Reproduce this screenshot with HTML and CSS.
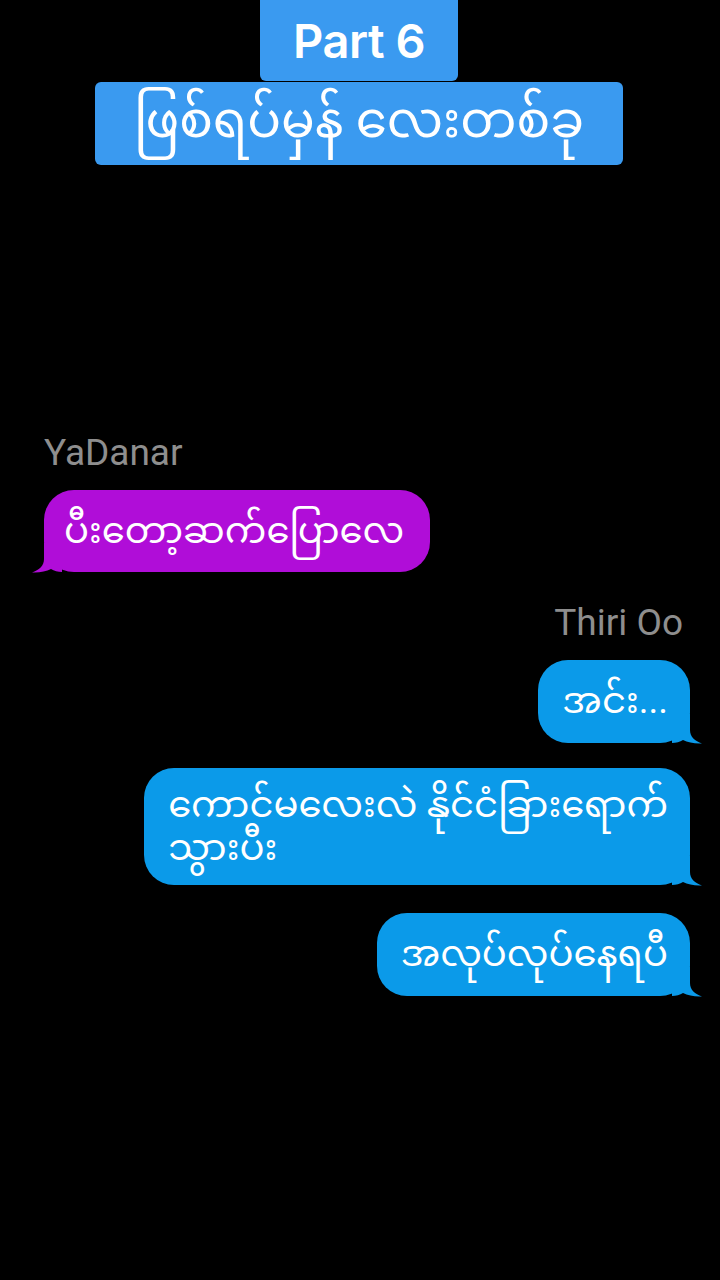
FILE: index.html
```html
<!DOCTYPE html>
<html lang="my">

<head>
    <meta charset="UTF-8">
    <meta name="viewport" content="width=device-width, initial-scale=1.0">
    <title>Part 6</title>
    <link rel="stylesheet" href="styles.css">
</head>

<body>

    <header class="title">
        <div class="title-tab">Part 6</div>
        <div class="title-box">ဖြစ်ရပ်မှန် လေးတစ်ခု</div>
    </header>

    <main class="chat">
        <div class="name">YaDanar</div>
        <div class="row">
            <div class="bubble bubble-in">
                ပီးတော့ဆက်ပြောလေ
                <svg class="tail tail-left" width="30" height="30" viewBox="0 0 30 30">
                    <path d="M12 0 L12 16 C12 23, 7 27, 0 29.5 C7 30, 14 28.5, 19 26 C22 28, 26 29, 30 29 L30 0 Z" />
                </svg>
            </div>
        </div>

        <div class="name name-out">Thiri Oo</div>
        <div class="row row-out">
            <div class="bubble bubble-out">
                အင်း...
                <svg class="tail tail-right" width="30" height="30" viewBox="0 0 30 30">
                    <path d="M12 0 L12 16 C12 23, 7 27, 0 29.5 C7 30, 14 28.5, 19 26 C22 28, 26 29, 30 29 L30 0 Z" />
                </svg>
            </div>
        </div>
        <div class="row row-out">
            <div class="bubble bubble-out wide">
                ကောင်မလေးလဲ နိုင်ငံခြားရောက်<br>သွားပီး
                <svg class="tail tail-right" width="30" height="30" viewBox="0 0 30 30">
                    <path d="M12 0 L12 16 C12 23, 7 27, 0 29.5 C7 30, 14 28.5, 19 26 C22 28, 26 29, 30 29 L30 0 Z" />
                </svg>
            </div>
        </div>
        <div class="row row-out row-last">
            <div class="bubble bubble-out">
                အလုပ်လုပ်နေရပီ
                <svg class="tail tail-right" width="30" height="30" viewBox="0 0 30 30">
                    <path d="M12 0 L12 16 C12 23, 7 27, 0 29.5 C7 30, 14 28.5, 19 26 C22 28, 26 29, 30 29 L30 0 Z" />
                </svg>
            </div>
        </div>
    </main>

</body>

</html>
```

FILE: styles.css
```css
body {
    margin: 0;
    padding: 0;
    background-color: #000;
    font-family: Roboto, "Noto Sans", "Noto Sans Myanmar", sans-serif;
    width: 720px;
    height: 1280px;
    overflow: hidden;
}

.title {
    display: flex;
    flex-direction: column;
    align-items: center;
    padding-left: 1px;
    padding-right: 3px;
}

.title-tab {
    width: 198px;
    height: 81px;
    margin-bottom: 1px;
    background-color: #3a9af0;
    border-radius: 0 0 6px 6px;
    color: #fff;
    font-family: Inter, "Noto Sans", sans-serif;
    font-weight: 600;
    font-size: 47px;
    line-height: 82px;
    text-align: center;
    letter-spacing: -0.5px;
}

.title-box {
    width: 528px;
    height: 83px;
    background-color: #3a9af0;
    border-radius: 6px;
    color: #fff;
    font-size: 50px;
    line-height: 76px;
    text-align: center;
    overflow: hidden;
}

.chat {
    padding: 267px 30px 0 44px;
}

.name {
    color: #8e8e8e;
    font-size: 37px;
    line-height: 42px;
    height: 42px;
}

.name-out {
    text-align: right;
    margin-top: 30px;
    padding-right: 7px;
}

.row {
    display: flex;
    margin-top: 16px;
}

.row-out {
    justify-content: flex-end;
    margin-top: 25px;
}

.name-out + .row-out {
    margin-top: 16px;
}

.row-out.row-last {
    margin-top: 28px;
}

.bubble {
    position: relative;
    padding: 19px 26px 20px 20px;
    border-radius: 30px;
    color: #fff;
    font-size: 37px;
    line-height: 43px;
}

.bubble-in {
    background-color: #b00dd8;
}

.bubble-in .tail {
    fill: #b00dd8;
}

.bubble-out {
    background-color: #0b9ae9;
    padding: 19px 22px 21px 24px;
}

.bubble-out .tail {
    fill: #0b9ae9;
}

.wide {
    white-space: nowrap;
    padding-top: 15px;
    padding-bottom: 16px;
}

.tail {
    position: absolute;
    bottom: -1px;
}

.tail-left {
    left: -12px;
}

.tail-right {
    right: -12px;
    transform: scaleX(-1);
}
```
